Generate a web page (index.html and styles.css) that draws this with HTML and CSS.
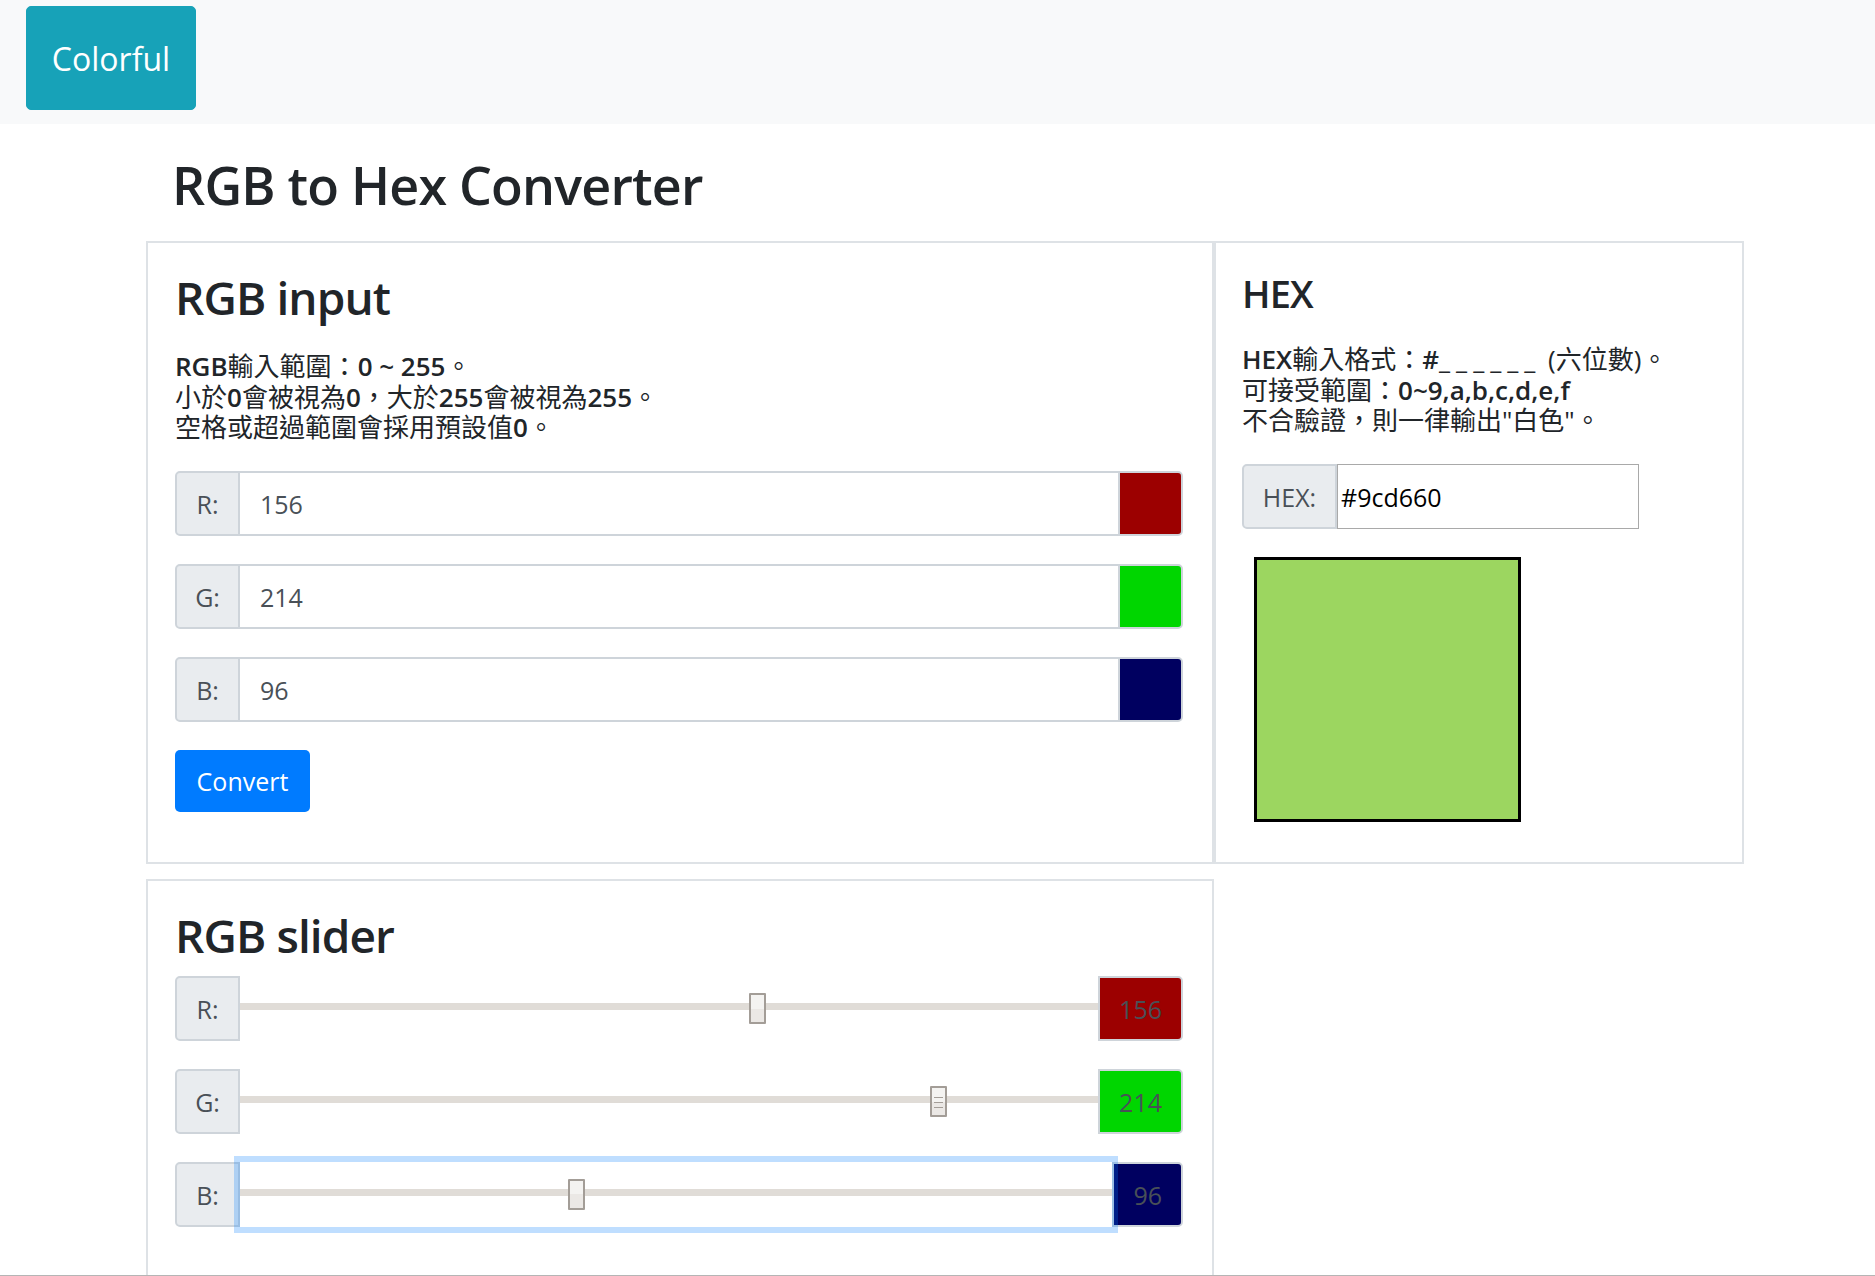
FILE: index.html
```html
<!DOCTYPE html>
<html lang="zh-Hant">
<head>
<meta charset="utf-8">
<title>RGB to Hex Converter</title>
<link rel="stylesheet" href="styles.css">
</head>
<body>
<nav class="navbar">
  <a class="brand-btn" href="#">Colorful</a>
</nav>

<main class="container">
  <h2 class="page-title">RGB to Hex Converter</h2>

  <div class="row-top">
    <section class="card card-rgb">
      <h3 class="card-title card-title-lg">RGB input</h3>
      <p class="desc"><b>RGB</b>輸入範圍：<b>0 ~ 255</b>。<br>小於<b>0</b>會被視為<b>0</b>，大於<b>255</b>會被視為<b>255</b>。<br>空格或超過範圍會採用預設值<b>0</b>。</p>

      <div class="ig">
        <span class="ig-label">R:</span>
        <input class="ig-input" type="text" value="156">
        <span class="swatch swatch-r"></span>
      </div>
      <div class="ig">
        <span class="ig-label">G:</span>
        <input class="ig-input" type="text" value="214">
        <span class="swatch swatch-g"></span>
      </div>
      <div class="ig">
        <span class="ig-label">B:</span>
        <input class="ig-input" type="text" value="96">
        <span class="swatch swatch-b"></span>
      </div>

      <button class="btn-convert" type="button">Convert</button>
    </section>

    <section class="card card-hex">
      <h4 class="card-title card-title-sm">HEX</h4>
      <p class="desc desc-hex"><b>HEX</b>輸入格式：<b>#<span class="blanks">______</span></b> (六位數)。<br>可接受範圍：<b>0~9,a,b,c,d,e,f</b><br>不合驗證，則一律輸出"白色"。</p>

      <div class="hex-ig">
        <span class="ig-label hex-label">HEX:</span>
        <input class="hex-input" type="text" value="#9cd660">
      </div>

      <div class="color-box"></div>
    </section>
  </div>

  <div class="row-bottom">
    <section class="card card-slider">
      <h3 class="card-title card-title-lg card-title-slider">RGB slider</h3>

      <div class="sl-row">
        <span class="ig-label">R:</span>
        <input class="sl-range" type="range" min="0" max="255" value="156">
        <span class="sl-value swatch-r">156</span>
      </div>
      <div class="sl-row">
        <span class="ig-label">G:</span>
        <input class="sl-range sl-grip" type="range" min="0" max="255" value="214">
        <span class="sl-value swatch-g">214</span>
      </div>
      <div class="sl-row">
        <span class="ig-label">B:</span>
        <input class="sl-range sl-focused" type="range" min="0" max="255" value="96">
        <span class="sl-value swatch-b">96</span>
      </div>
    </section>
  </div>
</main>

<div class="viewport-edge"></div>
</body>
</html>
```

FILE: styles.css
```css
* {
  box-sizing: border-box;
}

html, body {
  margin: 0;
  padding: 0;
}

body {
  font-family: "Open Sans", "Noto Sans CJK TC", sans-serif;
  color: #212529;
  background: #ffffff;
}

/* ---------- navbar ---------- */
.navbar {
  height: 124px;
  background: #f8f9fa;
  padding: 6px 26px;
}

.brand-btn {
  display: flex;
  align-items: center;
  justify-content: center;
  width: 170px;
  height: 104px;
  background: #17a2b8;
  border: 1px solid #17a2b8;
  border-radius: 5px;
  color: #ffffff;
  font-size: 32px;
  text-decoration: none;
}

/* ---------- layout ---------- */
.container {
  width: 1598px;
  margin-left: 146px;
}

.page-title {
  font-size: 52px;
  font-weight: 600;
  letter-spacing: -0.8px;
  line-height: 62px;
  margin: 30px 0 25px 26px;
}

.row-top {
  display: grid;
  grid-template-columns: 1068px 530px;
}

.row-bottom {
  display: grid;
  grid-template-columns: 1068px;
  margin-top: 15px;
}

.card {
  border: 2px solid #dee2e6;
  background: #ffffff;
}

.card-rgb {
  padding: 27px 29px 27px 27px;
}

.card-hex {
  padding: 27px 26px 27px 26px;
}

.card-slider {
  padding: 27px 29px 27px 27px;
}

.card-title {
  font-weight: 600;
  letter-spacing: -0.9px;
  margin: 0;
}

.card-title-lg {
  font-size: 46px;
  line-height: 55px;
  margin-bottom: 26px;
}

.card-title-sm {
  font-size: 38px;
  line-height: 46px;
  margin-bottom: 28px;
}

.card-title-slider {
  margin-bottom: 13px;
}

.desc {
  font-size: 26px;
  line-height: 30.5px;
  margin: 0 0 28.5px;
}

.desc b {
  font-weight: 600;
}

.blanks {
  letter-spacing: 6px;
}

/* ---------- input groups ---------- */
.ig {
  display: flex;
  height: 65px;
  margin-bottom: 28px;
}

.ig-label {
  flex: none;
  width: 65px;
  display: flex;
  align-items: center;
  justify-content: center;
  background: #e9ecef;
  border: 2px solid #ced4da;
  border-radius: 5px 0 0 5px;
  color: #495057;
  font-size: 25px;
}

.ig-input {
  flex: 1;
  min-width: 0;
  height: 100%;
  margin: 0;
  border: 2px solid #ced4da;
  border-left: 0;
  border-right: 0;
  padding: 0 0 0 20px;
  font-family: "Open Sans", sans-serif;
  font-size: 25px;
  color: #495057;
  background: #ffffff;
  outline: none;
}

.swatch {
  flex: none;
  width: 65px;
  border: 2px solid #ced4da;
  border-radius: 0 5px 5px 0;
}

.swatch-r { background: #9c0000; }
.swatch-g { background: #00d600; }
.swatch-b { background: #000060; }

.btn-convert {
  display: block;
  width: 135px;
  height: 62px;
  margin: 0;
  padding: 0;
  background: #007bff;
  border: 0;
  border-radius: 5px;
  color: #ffffff;
  font-family: "Open Sans", sans-serif;
  font-size: 25px;
}

/* ---------- hex ---------- */
.hex-ig {
  display: flex;
  width: 397px;
  height: 65px;
}

.hex-label {
  width: 95px;
}

.hex-input {
  flex: 1;
  min-width: 0;
  height: 100%;
  margin: 0;
  border: 1px solid #a9a9a9;
  border-radius: 0;
  padding: 0 0 0 3px;
  font-family: "Open Sans", sans-serif;
  font-size: 25px;
  color: #000000;
  background: #ffffff;
  outline: none;
}

.color-box {
  width: 267px;
  height: 265px;
  margin: 28px 0 13px 12px;
  border: 3px solid #000000;
  background: #9cd660;
}

/* ---------- sliders ---------- */
.sl-row {
  display: flex;
  height: 65px;
  margin-bottom: 28px;
}

.sl-range {
  flex: 1;
  min-width: 0;
  height: 65px;
  margin: 0;
  padding: 0 23px;
  -webkit-appearance: none;
  appearance: none;
  background: linear-gradient(#e0dcd7, #e0dcd7) 0 27px / 100% 7px no-repeat;
  border: 0;
  outline: none;
}

.sl-range::-webkit-slider-runnable-track {
  height: 7px;
  background: transparent;
  border: 0;
}

.sl-range::-webkit-slider-thumb {
  -webkit-appearance: none;
  appearance: none;
  box-sizing: border-box;
  width: 17px;
  height: 31px;
  margin-top: -12px;
  border: 2px solid #a39d97;
  border-radius: 1px;
  background: linear-gradient(#f4f3f1 50%, #ebe8e5 50%);
}

.sl-range::-moz-range-track {
  height: 7px;
  background: transparent;
}

.sl-range::-moz-range-thumb {
  box-sizing: border-box;
  width: 17px;
  height: 31px;
  border: 2px solid #a39d97;
  border-radius: 1px;
  background: linear-gradient(#f4f3f1 50%, #ebe8e5 50%);
}

.sl-grip::-webkit-slider-thumb {
  background:
    linear-gradient(#a39d97, #a39d97) 50% 9px / 9px 1px no-repeat,
    linear-gradient(#a39d97, #a39d97) 50% 14px / 9px 1px no-repeat,
    linear-gradient(#a39d97, #a39d97) 50% 19px / 9px 1px no-repeat,
    linear-gradient(#f4f3f1 50%, #ebe8e5 50%);
}

.sl-focused {
  position: relative;
  z-index: 1;
  box-shadow: 0 0 0 6px rgba(0, 123, 255, 0.25);
}

.sl-value {
  flex: none;
  display: flex;
  align-items: center;
  padding: 0 19px;
  border: 2px solid #ced4da;
  border-radius: 0 5px 5px 0;
  color: #495057;
  font-size: 25px;
}

/* bottom edge of the viewport */
.viewport-edge {
  position: fixed;
  left: 0;
  right: 0;
  bottom: 0;
  height: 1px;
  background: #b5b5b5;
}
```
